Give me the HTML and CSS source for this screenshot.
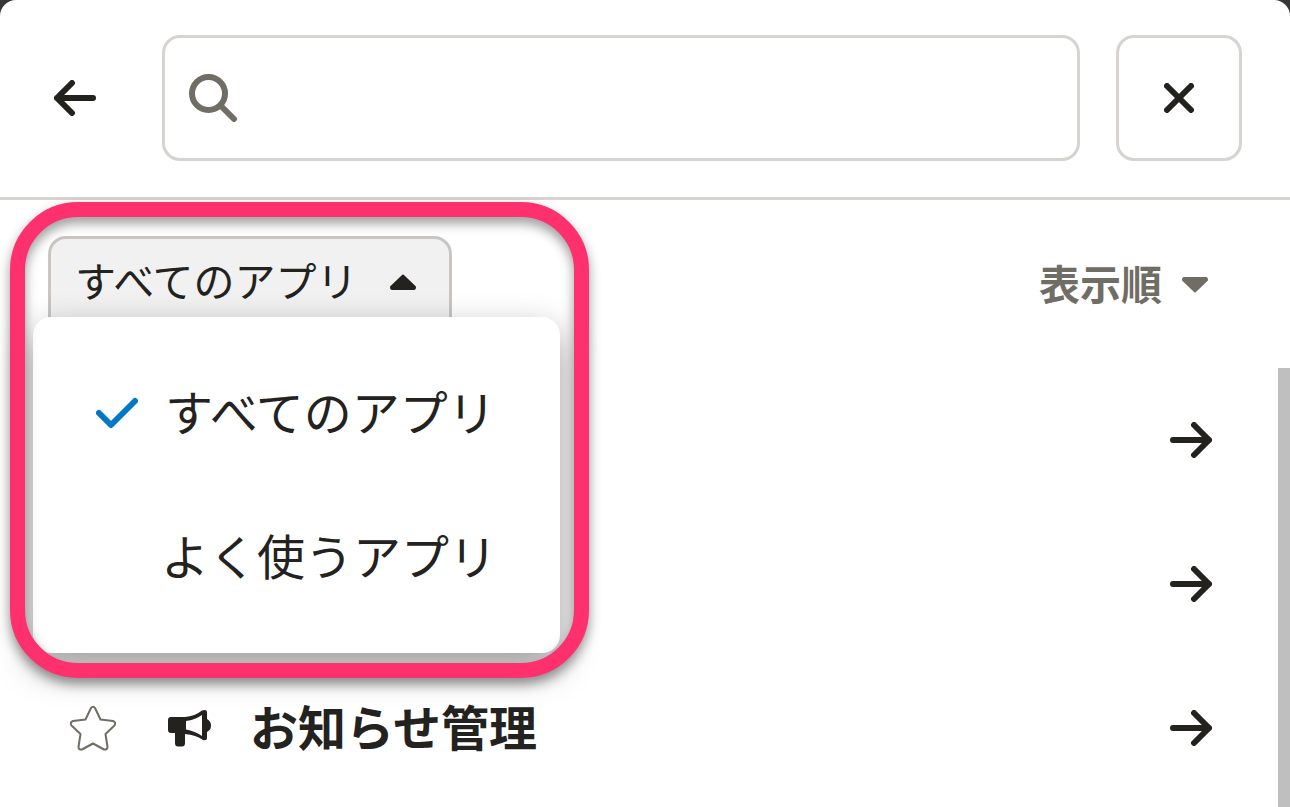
FILE: index.html
```
<!DOCTYPE html>
<html lang="ja">
<head>
    <meta charset="UTF-8">
    <meta name="viewport" content="width=device-width, initial-scale=1.0">
    <title>アプリ</title>
    <link rel="stylesheet" href="styles.css">
</head>
<body>
    <div class="panel">
        <header class="header">
            <button type="button" class="back-btn" aria-label="戻る">
                <svg width="42" height="36" viewBox="0 0 42 36"><path class="stroke" d="M18 3L3 18l15 15M3 18h36"/></svg>
            </button>
            <label class="search">
                <svg width="50" height="48" viewBox="0 0 50 48"><circle cx="19.500" cy="19.500" r="16.500"/><path d="M32 32l13 13"/></svg>
                <input type="search" class="search-input" aria-label="検索">
            </label>
            <button type="button" class="close-btn" aria-label="閉じる">
                <svg width="30" height="30" viewBox="0 0 30 30"><path class="stroke" d="M3 3l24 24M27 3L3 27"/></svg>
            </button>
        </header>

        <div class="toolbar">
            <div class="filter">
                <button type="button" class="filter-btn" aria-haspopup="menu" aria-expanded="true">
                    <span class="label">すべてのアプリ</span>
                    <svg width="28" height="16" viewBox="0 0 28 16"><path class="caret" d="M14 1.500L26 13Q26 15 25 15H3Q2 15 2 13Z"/></svg>
                </button>
                <div class="menu" role="menu">
                    <button type="button" class="menu-item" role="menuitemradio" aria-checked="true">
                        <svg class="check" width="42" height="32" viewBox="0 0 42 32"><path d="M3 16l12 12L39 4"/></svg>
                        <span class="label">すべてのアプリ</span>
                    </button>
                    <button type="button" class="menu-item" role="menuitemradio" aria-checked="false">
                        <span class="check"></span>
                        <span class="label">よく使うアプリ</span>
                    </button>
                </div>
                <div class="highlight"></div>
            </div>
            <button type="button" class="sort-btn">
                <span class="label">表示順</span>
                <svg width="28" height="16" viewBox="0 0 28 16"><path class="caret" d="M14 14.500L2 3Q2 1 3 1H25Q26 1 26 3Z"/></svg>
            </button>
        </div>

        <ul class="app-list">
            <li class="app-row">
                <a href="#" class="app-link" aria-label="アプリを開く">
                    <svg class="arrow" width="42" height="36" viewBox="0 0 42 36"><path class="stroke" d="M24 3l15 15-15 15M39 18H3"/></svg>
                </a>
            </li>
            <li class="app-row">
                <a href="#" class="app-link" aria-label="アプリを開く">
                    <svg class="arrow" width="42" height="36" viewBox="0 0 42 36"><path class="stroke" d="M24 3l15 15-15 15M39 18H3"/></svg>
                </a>
            </li>
            <li class="app-row">
                <button type="button" class="star-btn" aria-label="よく使うアプリに追加">
                    <svg width="48" height="46" viewBox="0 0 48 46"><path d="M22 3Q24 .5 26 3L31.500 14.500L44 16Q47.500 17.500 45.500 20.500L36.500 29L38.500 42Q38.500 45 35 44.500L24 38.500L13 44.500Q9.500 45 9.500 42L11.500 29L2.500 20.500Q.5 17.500 4 16L16.500 14.500Z"/></svg>
                </button>
                <a href="#" class="app-link">
                    <svg width="44" height="38" viewBox="0 0 44 38">
                        <path class="solid" fill-rule="evenodd" d="M3 8H17Q27 7 34 1.500Q39 0 39 3V10Q43 12 43 16.500Q43 21 39 23V29Q39 32 35 31Q28 26 17 25V34Q17 37.500 14 37.500H10Q7 37.500 7 34V24H3Q0 24 0 21V11Q0 8 3 8ZM18 12V20.500Q27 22 34 27V6Q27 11 18 12Z"/>
                    </svg>
                    <span class="label app-name">お知らせ管理</span>
                    <svg class="arrow" width="42" height="36" viewBox="0 0 42 36"><path class="stroke" d="M24 3l15 15-15 15M39 18H3"/></svg>
                </a>
            </li>
        </ul>
    </div>
</body>
</html>
```

FILE: styles.css
```
* {
    box-sizing: border-box;
}

body {
    margin: 0;
    background-color: #363636;
    color: #23221e;
    font-family: "Noto Sans CJK JP", sans-serif;
    font-size: 48px;
    line-height: 1;
}

button {
    margin: 0;
    padding: 0;
    border: none;
    background: none;
    color: inherit;
    font: inherit;
    cursor: pointer;
}

a {
    color: inherit;
    text-decoration: none;
}

svg {
    display: block;
    flex: none;
    fill: none;
    stroke-linecap: round;
    stroke-linejoin: round;
}

.stroke {
    stroke: #23221e;
    stroke-width: 6;
}

.caret {
    fill: currentColor;
    stroke: currentColor;
    stroke-width: 2;
}

.solid {
    fill: #23221e;
}

.label {
    padding-bottom: 6px;
}

.panel {
    display: flex;
    flex-direction: column;
    min-height: 100vh;
    background-color: #fff;
    border-radius: 16px 16px 0 0;
}

/* header */
.header {
    display: flex;
    align-items: center;
    padding: 35px 48px 36px 0;
    border-bottom: 3px solid #d6d3d0;
}

.back-btn {
    display: flex;
    align-items: center;
    justify-content: center;
    width: 150px;
    height: 126px;
    margin-right: 12px;
}

.search {
    display: flex;
    flex: 1;
    align-items: center;
    gap: 24px;
    height: 126px;
    padding: 0 24px;
    border: 3px solid #d6d3d0;
    border-radius: 18px;
}

.search svg {
    stroke: #706d65;
    stroke-width: 6;
}

.search-input {
    flex: 1;
    min-width: 0;
    border: none;
    outline: none;
    background: none;
    font: inherit;
    appearance: none;
}

.close-btn {
    display: flex;
    align-items: center;
    justify-content: center;
    width: 126px;
    height: 126px;
    margin-left: 36px;
    border: 3px solid #d6d3d0;
    border-radius: 18px;
}

/* filter and sort */
.toolbar {
    display: flex;
    align-items: flex-start;
    justify-content: space-between;
    padding: 36px 48px 34px;
    font-size: 41px;
}

.filter {
    position: relative;
}

.filter-btn,
.sort-btn {
    display: flex;
    align-items: center;
    height: 98px;
    padding: 0 30px 0 24px;
    border: 3px solid transparent;
}

.filter-btn {
    gap: 31px;
    height: 92px;
    padding-right: 32px;
    border-color: #c9c5c2;
    border-radius: 18px 18px 0 0;
    background-color: #f1f1f1;
}

.sort-btn {
    gap: 19px;
    color: #706d65;
    font-weight: bold;
}

.menu {
    position: absolute;
    z-index: 1;
    top: 81px;
    left: -15px;
    width: 527px;
    padding: 24px 0;
    border-radius: 18px;
    background-color: #fff;
    box-shadow: 0 15px 36px rgba(0, 0, 0, 0.4);
    font-size: 48px;
}

.menu-item {
    display: flex;
    align-items: center;
    gap: 27px;
    width: 100%;
    height: 144px;
    padding: 0 63px;
    white-space: nowrap;
}

.check {
    width: 42px;
    stroke: #0077c7;
    stroke-width: 6;
}

/* ring drawn round the open filter */
.highlight {
    position: absolute;
    z-index: 2;
    top: -34px;
    left: -38px;
    width: 579px;
    height: 476px;
    border: 15px solid #ff306e;
    border-radius: 68px;
    filter: drop-shadow(0 6px 6px rgba(0, 0, 0, 0.4));
    pointer-events: none;
}

/* app list */
.app-list {
    flex: 1;
    margin: 0;
    padding: 0;
    border-right: 12px solid #bfbfbf;
    list-style: none;
}

.app-row {
    display: flex;
    align-items: center;
    height: 144px;
    padding: 0 66px 0 69px;
}

.star-btn {
    margin-right: 51px;
}

.star-btn svg {
    stroke: #706d65;
    stroke-width: 2;
}

.app-link {
    display: flex;
    flex: 1;
    align-items: center;
    gap: 38px;
}

.app-name {
    font-weight: bold;
}

.arrow {
    margin-left: auto;
}
```
